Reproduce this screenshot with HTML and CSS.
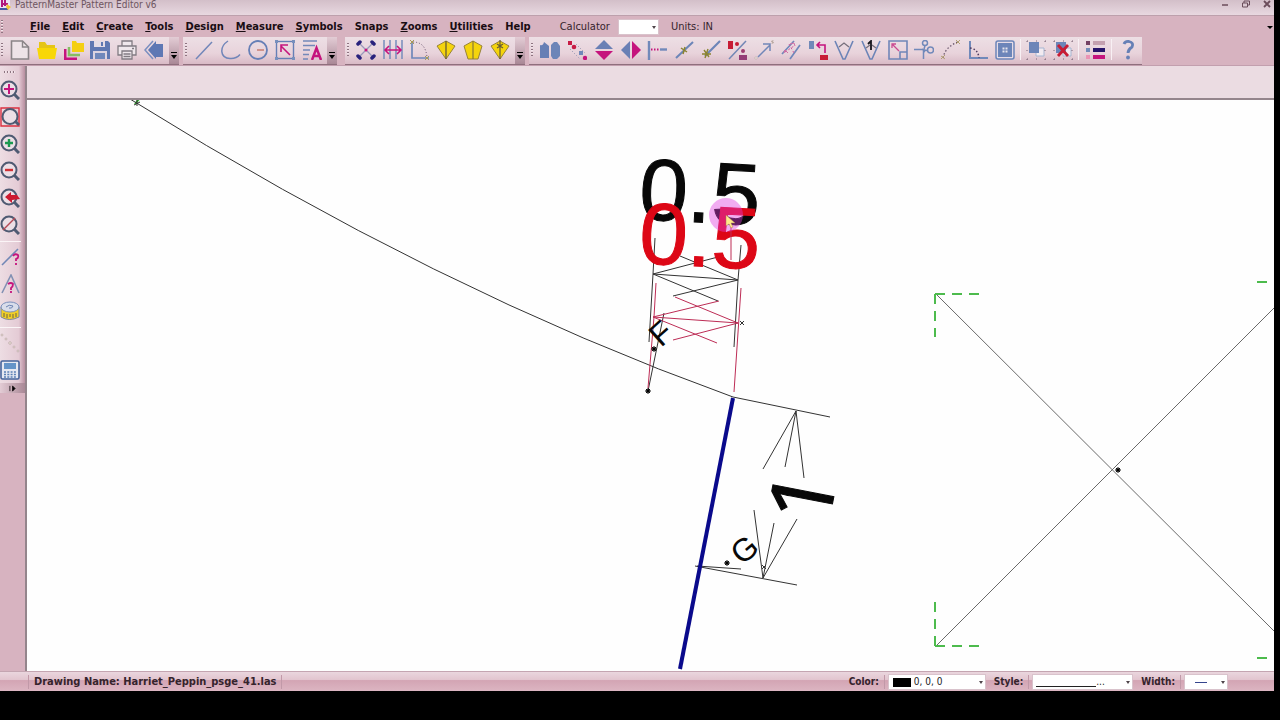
FILE: index.html
```html
<!DOCTYPE html>
<html lang="en">
<head>
<meta charset="utf-8">
<title>PatternMaster Pattern Editor v6</title>
<link rel="stylesheet" href="styles.css">
</head>
<body>
<div class="app">
  <header class="titlebar">
    <svg class="logo" viewBox="0 0 12 12"><rect width="10" height="9" fill="#e9e4f4"/><path d="M2 0v7M5 0v6M2 4h6" stroke="#b0187c" stroke-width="2"/><path d="M0 9h8" stroke="#4459a5" stroke-width="2"/><path d="M7 4l4 3-3 3-2-3z" fill="#f0c638"/></svg>
    <h1 class="title">PatternMaster Pattern Editor v6</h1>
    <div class="winbuttons">
      <button aria-label="Minimize"><svg viewBox="0 0 10 10"><path d="M2 5h6" stroke="#6b4d5b" stroke-width="1.500"/></svg></button>
      <button aria-label="Restore"><svg viewBox="0 0 10 10"><path d="M1.500 3h5v4h-5zM3 3V1h5.500v4H7" fill="none" stroke="#6b4d5b"/></svg></button>
      <button aria-label="Close"><svg viewBox="0 0 10 10"><path d="M2 1l6 6M8 1l-6 6" stroke="#6b4d5b" stroke-width="1.800"/></svg></button>
    </div>
  </header>

  <nav class="menubar">
    <span class="grip"></span>
    <div class="menus">
      <button><u>F</u>ile</button><button><u>E</u>dit</button><button><u>C</u>reate</button><button><u>T</u>ools</button><button><u>D</u>esign</button><button><u>M</u>easure</button><button><u>S</u>ymbols</button><button>Snaps</button><button><u>Z</u>ooms</button><button><u>U</u>tilities</button><button>Help</button>
    </div>
    <label class="calc" for="calc">Calculator</label>
    <span class="pick pick-calc"><select id="calc"><option></option></select></span>
    <span class="units">Units: IN</span>
    <button class="menumore" aria-label="More"><svg viewBox="0 0 8 8"><path d="M1 3h6L4 6z"/></svg></button>
  </nav>

  <div class="toolbars">
    <div class="toolbar">
      <span class="grip"></span>
      <div class="tools six">
        <button aria-label="New"><svg viewBox="0 0 20 20"><path d="M1.500 1h11l6 6v12h-17z" fill="#eee4e8" stroke="#8b8588" stroke-width="1.600"/><path d="M12.500 1v6h6" fill="none" stroke="#8b8588" stroke-width="1.400"/></svg></button>
        <button aria-label="Open"><svg viewBox="0 0 20 20"><path d="M2 2h6l2 3h8v4H2z" fill="#e5c516"/><path d="M0 8h20l-2 11H2z" fill="#f8d707"/></svg></button>
        <button aria-label="Open several"><svg viewBox="0 0 20 20"><path d="M1 9v10h12" fill="none" stroke="#c5147d" stroke-width="3"/><path d="M5 7v8h11" fill="none" stroke="#86bd63" stroke-width="2.500"/><path d="M8 1h4l1 2h7v9H8z" fill="#f4cf12"/></svg></button>
        <button aria-label="Save"><svg viewBox="0 0 20 20"><path d="M0 1h18l2 2v16H0z" fill="#6078b2"/><path d="M4 1h11v6H4z" fill="#e5dce6"/><path d="M11 2h2v4h-2z" fill="#6078b2"/><path d="M3 11h14v8H3z" fill="#dcd3e0"/><path d="M5 13h10v6H5z" fill="#7188bb"/></svg></button>
        <button aria-label="Print"><svg viewBox="0 0 20 20"><g fill="#efe7ec" stroke="#817b82" stroke-width="1.300"><path d="M5 6V1h10v5"/><path d="M1 6h18v9H1z"/><path d="M5 11h10v8H5z"/><path d="M6.500 14h7M6.500 16.500h7M15 8.500h2"/></g></svg></button>
        <button aria-label="Back"><svg viewBox="0 0 20 20"><path d="M4 10l8-9v3h7v13h-7v2z" fill="#5e78b4"/><path d="M9 1L1 10l8 9" fill="none" stroke="#7a8fc0" stroke-width="1.500"/></svg></button>
      </div>
      <button class="more" aria-label="More file tools"><svg viewBox="0 0 8 8"><path d="M1 0h6v1H1zM1 3h6L4 7z"/></svg></button>
    </div>

    <div class="toolbar second">
      <span class="grip"></span>
      <div class="tools five">
        <button aria-label="Line"><svg viewBox="0 0 20 20"><path d="M2 19L18 2" stroke="#7186b9" stroke-width="1.500"/></svg></button>
        <button aria-label="Arc"><svg viewBox="0 0 20 20"><path d="M7 1C-2 7-1 18 9 18.500q6 .5 10-4" fill="none" stroke="#7186b9" stroke-width="1.500"/></svg></button>
        <button aria-label="Circle"><svg viewBox="0 0 20 20"><circle cx="10" cy="10" r="9" fill="none" stroke="#667fb6" stroke-width="1.800"/><path d="M9 10h7" stroke="#c77d70" stroke-width="1.500"/></svg></button>
        <button aria-label="Select"><svg viewBox="0 0 20 20"><rect x="1.500" y="1.500" width="17" height="17" fill="none" stroke="#667fb6" stroke-width="1.400"/><path d="M0 0h3v3H0zM17 0h3v3h-3zM0 17h3v3H0zM17 17h3v3h-3z" fill="#7890bd"/><path d="M15 15L6 6M6 12V5h7" fill="none" stroke="#c5147d" stroke-width="1.600"/></svg></button>
        <button aria-label="Text"><svg viewBox="0 0 20 20"><path d="M1 1h14M1 5.500h12M1 10h7M1 14.500h6M1 19h5" stroke="#7388b9" stroke-width="1.500"/><path d="M10 20L14.500 8 19 20M12 16h5" fill="none" stroke="#c5147d" stroke-width="2.500"/></svg></button>
      </div>
      <button class="more" aria-label="More draw tools"><svg viewBox="0 0 8 8"><path d="M1 0h6v1H1zM1 3h6L4 7z"/></svg></button>
    </div>

    <div class="toolbar third">
      <span class="grip"></span>
      <div class="tools six">
        <button aria-label="Stretch points"><svg viewBox="0 0 20 20"><path d="M4 4l12 12M16 4L4 16" stroke="#9999bb" stroke-width="1.300"/><path d="M2 4l2-2M16 2l2 2M2 16l2 2M16 18l2-2" stroke="#28217c" stroke-width="3.500" stroke-linecap="round"/><circle cx="10" cy="10" r="1.500" fill="#c5147d"/></svg></button>
        <button aria-label="Distance"><svg viewBox="0 0 20 20"><path d="M1 0v19M7 0v19M13 0v19M19 0v19" stroke="#6f88ba" stroke-width="1.400"/><path d="M2 10h16M6 6l-4 4 4 4M14 6l4 4-4 4" fill="none" stroke="#c5147d" stroke-width="1.600"/></svg></button>
        <button aria-label="Angle"><svg viewBox="0 0 20 20"><path d="M2 1v17h17" fill="none" stroke="#6f88ba" stroke-width="1.700"/><path d="M3 2q13 0 14 16" fill="none" stroke="#604c68" stroke-dasharray="1 2"/><path d="M0 0l4 4M4 0L0 4M15 16l4 4M19 16l-4 4" stroke="#a79c58"/></svg></button>
        <button aria-label="Dart"><svg viewBox="0 0 20 20"><path d="M1 6l9-5 9 5-9 13z" fill="#f5d40d" stroke="#97833b"/><path d="M10 1v18" stroke="#665b38" stroke-width="1.300"/></svg></button>
        <button aria-label="Open dart"><svg viewBox="0 0 20 20"><path d="M1 6l9-5 9 5-4 13H5z" fill="#f5d40d" stroke="#97833b"/><path d="M10 1v18" stroke="#887838" stroke-width="1.200"/></svg></button>
        <button aria-label="Move dart"><svg viewBox="0 0 20 20"><path d="M1 6l9-5 9 5-9 13z" fill="#f5d40d" stroke="#97833b"/><path d="M10 0v19M7 4l6 4M13 4L7 8" stroke="#665b38" stroke-width="1.200"/></svg></button>
      </div>
      <button class="more" aria-label="More dart tools"><svg viewBox="0 0 8 8"><path d="M1 0h6v1H1zM1 3h6L4 7z"/></svg></button>
    </div>

    <div class="toolbar fourth">
      <span class="grip"></span>
      <div class="tools eighteen">
        <button aria-label="Copy piece"><svg viewBox="0 0 20 20"><path d="M0 5q3 1 4-3l5 4v12H0z" fill="#667fb5"/><path d="M11 5l3-3h3l3 4v10l-3 3h-4l-2-3z" fill="#6c85b8"/></svg></button>
        <button aria-label="Move points"><svg viewBox="0 0 20 20"><path d="M1 1h4v4H1z" fill="#c71c45"/><circle cx="7" cy="7" r="2.300" fill="#c71c45"/><path d="M12 11h4v4h-4z" fill="#6f88ba"/><circle cx="18" cy="18" r="2.200" fill="#c5147d"/><path d="M3 9l10 10M9 4l9 9" stroke="#8f91ad" stroke-dasharray="1 2"/></svg></button>
        <button aria-label="Flip vertically"><svg viewBox="0 0 20 20"><path d="M10 0l9 9H1z" fill="#6a80b5"/><path d="M1 11h18l-9 9z" fill="#c5147d"/></svg></button>
        <button aria-label="Flip horizontally"><svg viewBox="0 0 20 20"><path d="M0 10l9-9v18z" fill="#6a80b5"/><path d="M11 1l9 9-9 9z" fill="#c5147d"/></svg></button>
        <button aria-label="Extend"><svg viewBox="0 0 20 20"><path d="M2 1v19" stroke="#7289ba" stroke-width="2.400"/><path d="M4 9.500h9" stroke="#c5147d" stroke-width="2" stroke-dasharray="1.500 1.500"/><path d="M13 9.500h7" stroke="#7289ba" stroke-width="2.400"/></svg></button>
        <button aria-label="Split line"><svg viewBox="0 0 20 20"><path d="M2 18L19 2" stroke="#6c85b8" stroke-width="2"/><path d="M7 8l6 4M11 7l-2 7" stroke="#8a8430" stroke-width="1.500"/></svg></button>
        <button aria-label="End point"><svg viewBox="0 0 20 20"><path d="M4 16L19 1" stroke="#6c85b8" stroke-width="2.200"/><path d="M3 10l5 7M7 9l-3 9M1 14h9" stroke="#8a8430" stroke-width="1.400"/></svg></button>
        <button aria-label="Divide"><svg viewBox="0 0 20 20"><path d="M1 1h5v8H1z" fill="#c71c35"/><circle cx="10" cy="4" r="2" fill="#c71c35"/><path d="M2 19L19 1" stroke="#7287b5" stroke-width="1.500"/><circle cx="16" cy="11" r="2" fill="#9e3b70"/><path d="M12 15h8v5h-8z" fill="#943b76"/></svg></button>
        <button aria-label="Direction"><svg viewBox="0 0 20 20"><path d="M4 17L16 5M9 4h7v7" fill="none" stroke="#7186b8" stroke-width="1.500"/><circle cx="2" cy="18" r="1.200" fill="#f5eee5" stroke="#aa9d9f" stroke-width=".5"/><path d="M17 1l3 2M19 0l-1 4" stroke="#b9a9a1"/></svg></button>
        <button aria-label="Parallel"><svg viewBox="0 0 20 20"><path d="M1 14L13 1M9 19L19 5" stroke="#6f88ba" stroke-width="1.700"/><path d="M4 12l9-6M8 4l5 9" stroke="#cd5b9c" stroke-dasharray="2 2"/><path d="M9 4l4-1 1 3M3 13l1-3 3 3" fill="none" stroke="#d26fa4"/></svg></button>
        <button aria-label="Align"><svg viewBox="0 0 20 20"><path d="M1 1h5v8H1z" fill="#7189b8"/><path d="M17 13V5H9M12 2L9 5l3 3" fill="none" stroke="#c5147d" stroke-width="1.600"/><path d="M12 15h8v5h-8z" fill="#c71c35"/></svg></button>
        <button aria-label="Corner"><svg viewBox="0 0 20 20"><path d="M1 1l8 18h2l8-18" fill="none" stroke="#6c84b7" stroke-width="1.600"/><path d="M5 7l5-4 5 4" fill="none" stroke="#77707c" stroke-width="1.300"/></svg></button>
        <button aria-label="Corner distance"><svg viewBox="0 0 20 20"><path d="M1 1l8 18h2l8-18" fill="none" stroke="#6c84b7" stroke-width="1.600"/><path d="M5 8l4-3M11 5l4 3" stroke="#77707c" stroke-width="1.300"/><path d="M7 4l3-3v9" fill="none" stroke="#17161d" stroke-width="1.800"/></svg></button>
        <button aria-label="Scale"><svg viewBox="0 0 20 20"><path d="M1 1h18v18H1zM12 12h7v7h-7z" fill="none" stroke="#7086b8" stroke-width="1.600"/><path d="M11 11L4 4M4 8V4h4" fill="none" stroke="#ca4b91" stroke-width="1.300"/></svg></button>
        <button aria-label="Cut"><svg viewBox="0 0 20 20"><g fill="none" stroke="#7189ba" stroke-width="1.500"><circle cx="11" cy="3" r="2.500"/><circle cx="16.500" cy="10" r="3"/><path d="M11 5.500L9.500 11v8M0 9.500h8l5 1M8 9l3 3"/></g></svg></button>
        <button aria-label="Curve points"><svg viewBox="0 0 20 20"><path d="M2 18Q4 7 17 2" fill="none" stroke="#66536a" stroke-width="1.300" stroke-dasharray="1.500 2"/><path d="M0 16l4 3M4 15l-4 4M15 0l4 4M19 0l-4 4" stroke="#b2a073"/></svg></button>
        <button aria-label="Square"><svg viewBox="0 0 20 20"><path d="M2 1v17h18" fill="none" stroke="#7189ba" stroke-width="2"/><path d="M2 8q8 1 9 10" fill="none" stroke="#4d3b60" stroke-width="1.500" stroke-dasharray="1.500 2"/></svg></button>
        <button aria-label="Grid"><svg viewBox="0 0 20 20"><rect x="1" y="1" width="18" height="18" rx="2" fill="#e5dbe6" stroke="#6c85b9" stroke-width="1.500"/><rect x="3" y="3" width="14" height="14" fill="#6c85b9"/><path d="M7.500 7.500h2v2h-2zM10.500 7.500h2v2h-2zM7.500 10.500h2v2h-2zM10.500 10.500h2v2h-2z" fill="#e5e4ec"/></svg></button>
      </div>
      <span class="sep"></span>
      <div class="tools two">
        <button aria-label="Group"><svg viewBox="0 0 20 20"><path d="M10 8h8v8h-8z" fill="#f2eaf0" stroke="#a6b6d2"/><path d="M3 2h10v11H3z" fill="#6c85b8"/><path d="M1 1h19M1 19h19M1 1v19M19 1v19" stroke="#7d6679" stroke-dasharray="1 8"/></svg></button>
        <button aria-label="Ungroup"><svg viewBox="0 0 20 20"><path d="M10 8h8v8h-8z" fill="#f2eaf0" stroke="#a6b6d2"/><path d="M3 2h10v11H3z" fill="#6c85b8"/><path d="M1 1h19M1 19h19M1 1v19M19 1v19" stroke="#7d6679" stroke-dasharray="1 8"/><path d="M5 5l10 11M15 5L5 16" stroke="#c71c35" stroke-width="2.800"/></svg></button>
      </div>
      <span class="sep"></span>
      <div class="tools one"><button aria-label="Properties"><svg viewBox="0 0 20 20"><path d="M1 1h4v4H1z" fill="#744063"/><path d="M1 8h4v4H1z" fill="#728cb9"/><path d="M1 15h4v4H1z" fill="#eb93b5"/><path d="M8 1h12v4H8z" fill="#c4a1b0"/><path d="M8 8h12v4H8z" fill="#27156a"/><path d="M8 15h12v4H8z" fill="#c5147d"/></svg></button></div>
      <span class="sep"></span>
      <div class="tools one"><button aria-label="Help"><svg viewBox="0 0 20 20"><path d="M6 4q1-3 5-2.500 5 1 3 5.500-4 2.500-4 6" fill="none" stroke="#6680b6" stroke-width="2.800"/><circle cx="10" cy="17.500" r="1.900" fill="#6680b6"/></svg></button></div>
    </div>
  </div>

  <main class="body">
    <aside class="dock">
      <div class="docktools">
        <span class="grip flat"></span>
        <button aria-label="Zoom extents"><svg viewBox="0 0 20 20"><g class="lens"><circle cx="9" cy="9" r="7.500"/><path d="M14 14l5 5"/></g><path d="M9 4v10M4 9h10" stroke="#c5147d" stroke-width="2"/></svg></button>
        <button aria-label="Zoom window"><svg viewBox="0 0 20 20"><path d="M1 1h18v18H1z" fill="none" stroke="#dc3040" stroke-width="1.400"/><g class="lens"><circle cx="10" cy="9.500" r="7.500"/><path d="M15 14l4 4"/></g></svg></button>
        <button aria-label="Zoom in"><svg viewBox="0 0 20 20"><g class="lens"><circle cx="9" cy="9" r="7.500"/><path d="M14 14l5 5"/></g><path d="M9 5v8M5 9h8" stroke="#1b9950" stroke-width="2.400"/></svg></button>
        <button aria-label="Zoom out"><svg viewBox="0 0 20 20"><g class="lens"><circle cx="9" cy="9" r="7.500"/><path d="M14 14l5 5"/></g><path d="M5 9h8" stroke="#cf3035" stroke-width="2.400"/></svg></button>
        <button aria-label="Zoom previous"><svg viewBox="0 0 20 20"><g class="lens"><circle cx="9" cy="9" r="7.500"/><path d="M14 14l5 5"/></g><path d="M5 9l6-5v3h6l3 4-8 1v3z" fill="#cd1a30"/></svg></button>
        <button aria-label="Zoom off"><svg viewBox="0 0 20 20"><g class="lens"><circle cx="9" cy="9" r="7.500"/><path d="M14 14l5 5"/></g><path d="M3 15L15 3" stroke="#b64a56" stroke-width="1.500"/></svg></button>
        <span class="rule"></span>
        <button aria-label="Query line"><svg viewBox="0 0 20 20"><path d="M2 18L18 2" stroke="#7187b6" stroke-width="1.600"/><path d="M13 9q2-3 5-1 1 3-2 4v2M16 16v2" fill="none" stroke="#c5147d" stroke-width="1.800"/></svg></button>
        <button aria-label="Query angle"><svg viewBox="0 0 20 20"><path d="M2 19l9-18 8 18" fill="none" stroke="#8391b3" stroke-width="1.600"/><path d="M8 10q3-2 5 0 0 3-2 4v2M11 17v2" fill="none" stroke="#c5147d" stroke-width="1.800"/></svg></button>
        <button aria-label="Tape measure"><svg viewBox="0 0 20 20"><path d="M1 6v10q8 5 18 0V6z" fill="#f1cf26" stroke="#7985a0"/><ellipse cx="10" cy="6" rx="9" ry="5" fill="#d9ddea" stroke="#7b90bc"/><path d="M6 6q3-3 7-1-1 3-4 2" fill="none" stroke="#6c83b3"/><path d="M4 12v4M7 13v4M10 13v3M13 13v4M16 12v4" stroke="#6c6244"/></svg></button>
        <span class="rule"></span>
        <button aria-label="Point list"><svg viewBox="0 0 20 20"><g fill="#f1e9df" stroke="#bca9a8" stroke-width=".8"><circle cx="2" cy="2" r="1"/><circle cx="6" cy="6" r="1"/><circle cx="10" cy="10" r="1.300"/><circle cx="14" cy="14" r="1"/><circle cx="18" cy="18" r="1"/></g></svg></button>
        <button aria-label="Calculator"><svg viewBox="0 0 20 20"><rect x="1" y="1" width="18" height="18" rx="1.500" fill="#e6e8f1" stroke="#46649c" stroke-width="1.600"/><path d="M4 3h12v6H4z" fill="#6594c8"/><path d="M4 12h12M4 14.500h12M4 17h12" stroke="#5a7fb5" stroke-width="1.700" stroke-dasharray="2 1.300"/></svg></button>
        <button class="dockmore" aria-label="More view tools"><svg viewBox="0 0 8 8"><path d="M1 1v6M4 1v6l3-3z" stroke="#1d1218"/></svg></button>
      </div>
    </aside>
    <section class="work">
      <div class="strip"></div>
      <svg class="drawing" viewBox="27 100 1247 571" preserveAspectRatio="xMidYMid slice" role="img" aria-label="Pattern drawing">
        <defs>
          <g id="node"><path d="M-3 0h6M0-3v6M-2-2l4 4M2-2l-4 4" stroke="#111"/><circle r="1.800"/></g>
        </defs>
        <path d="M135 104l4-5" stroke="#2fb52f" stroke-width="2"/>
        <g class="ink">
          <path d="M130 99Q436 290 733 397L830 417M134 105l6-3M137 100v6"/>
          <path d="M796 411L763 469M796 411L785 467M796 411L804 478"/>
          <path d="M763 578L754 510M763 578L774 523M763 578L797 519M695 566L797 585M697 566L741 569M762 565l4 4M766 565l-4 4"/>
          <path d="M655 238L653 274L649 342M741 245L738 280L734 347M653 274L738 280M653 274L718 257M680 256L738 280M653 274L718 301M738 280L673 296M664 313L648 391M740 321l4 4M744 321l-4 4"/>
        </g>
        <path class="ink soft" d="M936 294L1276 633M936 646L1276 306"/>
        <g class="ink crimson">
          <path d="M656 283L654 317L648 388M741 288L734 392M653 317L738 323M653 317L719 301M675 297L738 323M653 317L717 343M738 323L673 340"/>
        </g>
        <path class="seam" d="M733 398L680 669"/>
        <path class="corner" d="M935 294h44M935 294v43M935 646h44M935 646v-44M1257 282h20M1257 658h20"/>
        <text class="dim" transform="translate(638 219) rotate(3)">0.5</text>
        <text class="dim red" transform="translate(638 263) rotate(3)">0.5</text>
        <path class="ink crimson" d="M731 226V260"/>
        <text class="dim one-inch" transform="translate(828 527) rotate(-79)">1</text>
        <text class="mark" transform="translate(661 348) rotate(-42)">F</text>
        <text class="mark" transform="translate(742 566) rotate(-40)">G</text>
        <use href="#node" x="654" y="349"/><use href="#node" x="648" y="391"/><use href="#node" x="727" y="563"/><use href="#node" x="1118" y="470"/>
        <circle cx="726" cy="215" r="17" fill="#e03ce0" fill-opacity=".42"/>
        <path d="M726 215v11l3-2 2 4 2-1-2-4h4z" fill="#ffe98a" stroke="#a67a5a" stroke-width=".5"/>
      </svg>
    </section>
  </main>

  <footer class="statusbar">
    <span class="drawingname">Drawing Name: Harriet_Peppin_psge_41.las</span>
    <label for="color">Color:</label>
    <span class="pick pick-color"><select id="color"><option>0, 0, 0</option></select></span>
    <label for="style">Style:</label>
    <span class="pick pick-style"><select id="style"><option>...</option></select></span>
    <label for="width">Width:</label>
    <span class="pick pick-width"><select id="width"><option></option></select></span>
  </footer>
</div>
</body>
</html>
```
FILE: styles.css
```css
* { box-sizing: border-box; }
body {
  margin: 0;
  height: 100vh;
  padding: 0 6px 29px 0;
  background: #000;
  overflow: hidden;
  font: 11px/14px "DejaVu Sans Condensed", "DejaVu Sans", sans-serif;
  color: #35232c;
}
button {
  margin: 0;
  padding: 0;
  border: 0;
  background: none;
  font: inherit;
  color: inherit;
  display: flex;
  align-items: center;
  justify-content: center;
}
.app { height: 100%; display: flex; flex-direction: column; background: #d7b3c0; }

.titlebar {
  flex: none;
  height: 16px;
  display: flex;
  align-items: flex-start;
  background: linear-gradient(#d3bfc9, #e8d8e0);
  border-bottom: 1px solid #bda0ac;
}
.logo { width: 12px; height: 12px; }
.title { flex: 1; margin: 0 3px; font-size: 10px; line-height: 9px; font-weight: 400; color: #6d5560; }
.winbuttons { display: flex; gap: 11px; padding-right: 2px; }
.winbuttons svg { width: 10px; height: 10px; display: block; }

.menubar { flex: none; height: 21px; display: flex; align-items: center; }
.menubar .grip { margin-left: 1px; }
.menus { display: flex; margin-left: 19px; font-weight: 700; color: #190d13; }
.menus button { display: block; padding: 0 6px; white-space: nowrap; }
.calc { margin: 0 8px 0 23px; }
.units { margin-left: 12px; }
.menumore { margin-left: auto; }
.menumore svg { width: 8px; height: 8px; }

.grip {
  flex: none;
  width: 4px;
  height: 13px;
  background: repeating-linear-gradient(#8e7581 0 1px, #f2e5eb 1px 2px, transparent 2px 3px) 0 0 / 2px 100% no-repeat;
}

.toolbars { flex: none; height: 29px; display: flex; border-bottom: 1px solid #c29fae; }
.toolbar {
  display: flex;
  align-items: center;
  padding: 0 0 2px 1px;
  background: linear-gradient(#eddfe5, #e8d3db 60%, #d9bac6);
  border-bottom: 1px solid #8f6f7d;
}
.second { margin-left: 4px; padding-left: 2px; }
.third { margin-left: 8px; padding-left: 2px; }
.fourth { margin-left: 4px; padding-left: 2px; }
.tools { display: flex; margin-left: 2px; }
.tools button { flex: 1; min-width: 0; }
.tools svg, .docktools svg { width: 20px; height: 20px; display: block; }
.six { width: 160px; }
.five { width: 134px; }
.eighteen { width: 481px; }
.two { width: 53px; margin: 0; }
.one { width: 28px; margin: 0; }
.more {
  align-self: stretch;
  width: 10px;
  margin: 0 0 -2px 2px;
  padding-top: 10px;
  background: linear-gradient(#e3ccd5, #a98896);
}
.toolbar .more svg { width: 8px; height: 8px; }
.sep { width: 1px; height: 21px; margin: 0 2px; background: #f8f0f4; }

.body { flex: 1; min-height: 0; display: flex; }
.dock { flex: none; width: 27px; border-right: 2px solid #94858c; }
.docktools {
  display: flex;
  flex-direction: column;
  background: linear-gradient(90deg, #eddde3, #e4cbd5 75%, #b88fa0);
  border-radius: 0 0 4px 0;
}
.docktools button { width: 20px; height: 27px; }
.flat { width: 12px; height: 2px; margin: 5px 0 3px 4px; background: repeating-linear-gradient(90deg, #8e7581 0 1px, #f2e5eb 1px 2px, transparent 2px 3px); }
.rule { height: 1px; margin: 3px 4px 1px 0; background: #fbf5f7; }
.lens { fill: #ecdfe6; stroke: #4f5a72; stroke-width: 2; }
.lens path { stroke-width: 3; }
.docktools .dockmore { width: 100%; height: 10px; background: linear-gradient(90deg, #e3ccd5, #a98896); }
.docktools .dockmore svg { width: 7px; height: 7px; }

.work { flex: 1; min-width: 0; display: flex; flex-direction: column; background: #fefefe; }
.strip { flex: none; height: 34px; background: #ebdce2; border-bottom: 2px solid #94858c; }
.drawing { flex: 1; min-height: 0; width: 100%; display: block; }
.ink { fill: none; stroke: #333; stroke-width: 1; }
.soft { stroke: #6a6a6a; }
.crimson { stroke: #bd2c55; }
.seam { stroke: #0a0a8c; stroke-width: 4; }
.corner { fill: none; stroke: #4dbb4d; stroke-width: 2; stroke-dasharray: 10 7; }
.dim { font: 87px "Liberation Sans", Arial, sans-serif; fill: #080808; stroke: #080808; stroke-width: 1; }
.red { fill: #dd0716; stroke: #dd0716; }
.one-inch { font-family: "Noto Sans", "Open Sans", sans-serif; }
.mark { font: 32px "Liberation Sans", Arial, sans-serif; fill: #080808; }

.statusbar {
  flex: none;
  height: 20px;
  display: flex;
  align-items: center;
  padding: 1px 46px 0 28px;
  background: linear-gradient(#ead6de, #e2c5cf 40%, #d3a5b4 45%, #dcb5c2);
  border-top: 1px solid #c4a5b1;
  font-size: 11px;
  font-weight: 700;
}
.drawingname { margin-right: auto; padding: 0 4px 0 5px; border: solid #c199a8; border-width: 0 1px; }
.statusbar label { padding: 0 5px 0 8px; margin-right: 3px; border-right: 1px solid #c199a8; font-size: 10px; white-space: nowrap; }

.pick { position: relative; display: block; height: 16px; }
.pick select {
  display: block;
  width: 100%;
  height: 100%;
  margin: 0;
  padding: 0 10px 0 4px;
  border: 1px solid #d9c3cc;
  border-radius: 0;
  appearance: none;
  background: #fff;
  font: inherit;
  font-size: 10px;
  font-weight: 400;
  color: #222;
}
.pick::after {
  content: "";
  position: absolute;
  right: 3px;
  top: 7px;
  border: 2px solid transparent;
  border-top: 3px solid #4e444a;
  border-bottom: 0;
  pointer-events: none;
}
.pick-calc { width: 41px; }
.pick-color { width: 98px; }
.pick-style { width: 101px; }
.pick-width { width: 44px; }
.pick-color select { padding-left: 25px; background: linear-gradient(#000, #000) 4px center / 18px 9px no-repeat #fff; }
.pick-style select { padding-left: 63px; background: linear-gradient(#222, #222) 3px 11px / 60px 1px no-repeat #fff; }
.pick-width select { background: linear-gradient(#35458d, #35458d) 10px center / 12px 1px no-repeat #fff; }
```
